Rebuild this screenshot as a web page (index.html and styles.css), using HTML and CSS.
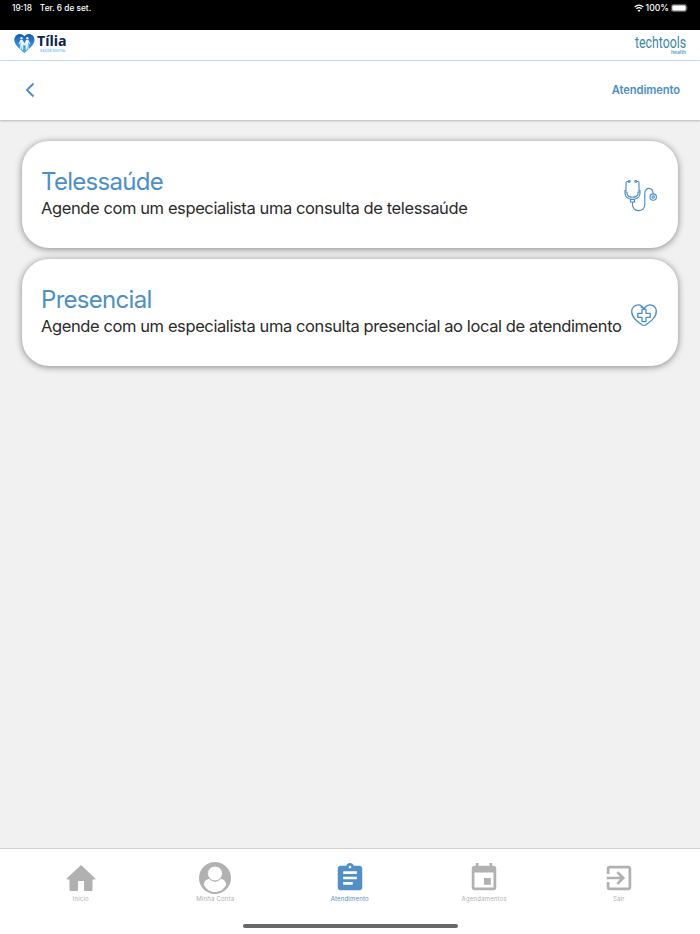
FILE: index.html
```html
<!DOCTYPE html>
<html lang="pt">
<head>
    <meta charset="UTF-8">
    <meta name="viewport" content="width=device-width, initial-scale=1.0">
    <title>Atendimento</title>
    <link rel="stylesheet" href="styles.css">
</head>
<body>
    <div class="status">
        <div class="status-left"><span class="time">19:18</span><span class="date">Ter. 6 de set.</span></div>
        <div class="status-right">
            <svg class="wifi" viewBox="0 0 10 8">
                <path d="M.7 3Q5-.8 9.3 3M2.4 4.8Q5 2.5 7.6 4.8" fill="none" stroke="#fff" stroke-width="1.3"/>
                <path d="M5 8L3.5 6.3Q5 5 6.5 6.3z" fill="#fff"/>
            </svg>
            <span class="percent">100%</span>
            <svg class="battery" viewBox="0 0 18 8">
                <rect x=".4" y=".4" width="15.2" height="7.2" rx="2" fill="none" stroke="#777" stroke-width=".8"/>
                <rect x="1.2" y="1.2" width="13.6" height="5.6" rx="1.2" fill="#fff"/>
                <path d="M16.4 2.8q1.2 1.2 0 2.4z" fill="#777"/>
            </svg>
        </div>
    </div>
    <div class="brand">
        <svg class="logo-tilia" viewBox="0 0 54 22">
            <defs>
                <linearGradient id="heart" x1="0" y1="0" x2="0" y2="1">
                    <stop offset="0" stop-color="#1559b0"/>
                    <stop offset="1" stop-color="#4ab4ff"/>
                </linearGradient>
            </defs>
            <path d="M10.4 20.2C6 16.2.3 12 .3 6.8.3 1 7-1.2 10.4 3.3 13.8-1.2 20.5 1 20.5 6.8 20.5 12 14.8 16.2 10.4 20.2z" fill="url(#heart)"/>
            <g fill="#eaf5ff">
                <circle cx="7.5" cy="5.3" r="1.2"/>
                <circle cx="13.3" cy="5.3" r="1.2"/>
                <path d="M6.3 7h2.4l1.7 3.5L12.1 7h2.4l1.8 4-.7.5-1.3-2.3.4 7h-1.2l-.3-3.6-.5 4.5h-1l-.3-5.3-1 .8-1-.8-.3 5.3h-1l-.5-4.5-.3 3.6H6l.5-7-1.3 2.3-.7-.5z"/>
            </g>
            <text class="tilia-name" x="23" y="13.4" textLength="29.5" lengthAdjust="spacingAndGlyphs">Tília</text>
            <text class="tilia-sub" x="26" y="18.600" textLength="26" lengthAdjust="spacingAndGlyphs">SAÚDE DIGITAL</text>
        </svg>
        <svg class="logo-tech" viewBox="0 0 52 22">
            <text class="tech-name" x="0" y="15" textLength="51" lengthAdjust="spacingAndGlyphs">techtools</text>
            <text class="tech-sub" x="36" y="21" textLength="15" lengthAdjust="spacingAndGlyphs">health</text>
        </svg>
    </div>
    <div class="header">
        <svg class="back" viewBox="0 0 10 16"><path d="M8.5 1.5L2 8l6.500 6.500" fill="none" stroke="currentColor" stroke-width="1.900"/></svg>
        <div class="title">Atendimento</div>
    </div>
    <div class="content">
        <div class="card">
            <div class="card-text">
                <div class="card-title">Telessaúde</div>
                <div class="card-desc">Agende com um especialista uma consulta de telessaúde</div>
            </div>
            <svg class="stethoscope" viewBox="0 0 34 34">
                <g fill="none" stroke="currentColor" stroke-width="1.150">
                    <path d="M4.500 2.500H3.200Q2 2.500 2 3.700V11.500H1V14.500Q1.500 19.500 7 20.200H10Q15.500 19.500 16 14.500V11.500H15V3.700Q15 2.500 13.800 2.500H12.500"/>
                    <path d="M1 13h2V15Q4 18.200 8.500 18.200T14 15V13h2"/>
                    <circle cx="5.300" cy="2.500" r=".9"/>
                    <circle cx="11.700" cy="2.500" r=".9"/>
                    <path d="M6.500 20.500h4v2.500h-4zM8.500 23V25.500C8.500 34 20.800 33.500 20.800 25.500V14.500C20.800 7.500 29 8 29 14.500V15"/>
                    <circle cx="29.200" cy="18" r="3.200"/>
                    <circle cx="29.200" cy="18" r="1.200"/>
                </g>
            </svg>
        </div>
        <div class="card">
            <div class="card-text">
                <div class="card-title">Presencial</div>
                <div class="card-desc">Agende com um especialista uma consulta presencial ao local de atendimento</div>
            </div>
            <svg class="heart" viewBox="0 0 26 22">
                <g fill="none" stroke="currentColor" stroke-width="1.300" stroke-linejoin="round">
                    <path d="M9.500 3.200Q11 3.200 12.900 4.800 15 1.200 18.600.8C23.500.7 25.300 4.500 25.300 7.500 25.300 13.500 19.500 17.500 14.500 21Q12.900 21.800 11.300 21C6.300 17.500.7 13.500.7 7.500.7 3.500 3.800.7 7.400.8Q11 1 12.900 4.800"/>
                    <path d="M11 5.300h4V9.400h4.200v4H15v4.200h-4v-4.200H6.800v-4H11z"/>
                </g>
            </svg>
        </div>
    </div>
    <div class="nav">
        <div class="nav-item">
            <svg class="nav-icon" viewBox="0 0 34 34">
                <path d="M17 4L31.500 17.700q.3.700-.5.700h-2.500V29q0 1-1 1H21q-1 0-1-1v-9h-6v9q0 1-1 1H6.500q-1 0-1-1V18.400H3q-.8 0-.5-.7z" fill="currentColor"/>
            </svg>
            <div class="nav-label">Início</div>
        </div>
        <div class="nav-item">
            <svg class="nav-icon" viewBox="0 0 34 34">
                <circle cx="17" cy="17" r="16" fill="currentColor"/>
                <path d="M5.800 24C6 20 8.500 18 11.500 18Q17 23.500 22.500 18C25.500 18 28 20 28.200 24 25 29 21.500 31 17 31S9 29 5.800 24z" fill="#fff"/>
                <circle cx="17" cy="12.500" r="7.500" fill="#fff" stroke="currentColor"/>
            </svg>
            <div class="nav-label">Minha Conta</div>
        </div>
        <div class="nav-item active">
            <svg class="nav-icon" viewBox="-.5 -.5 25 25">
                <path d="M19 3h-4.180C14.400 1.840 13.300 1 12 1s-2.400.84-2.820 2H5c-1.100 0-2 .9-2 2v14c0 1.100.9 2 2 2h14c1.100 0 2-.9 2-2V5c0-1.100-.9-2-2-2zm-7 0c.55 0 1 .45 1 1s-.45 1-1 1-1-.45-1-1 .45-1 1-1zm2 14H7v-2h7v2zm3-4H7v-2h10v2zm0-4H7V7h10v2z" fill="currentColor"/>
            </svg>
            <div class="nav-label">Atendimento</div>
        </div>
        <div class="nav-item">
            <svg class="nav-icon" viewBox="-.5 -.5 25 25">
                <path d="M17 12h-5v5h5v-5zM16 1v2H8V1H6v2H5c-1.110 0-1.990.9-1.990 2L3 19c0 1.100.89 2 2 2h14c1.100 0 2-.9 2-2V5c0-1.100-.9-2-2-2h-1V1h-2zm3 18H5V8h14v11z" fill="currentColor"/>
            </svg>
            <div class="nav-label">Agendamentos</div>
        </div>
        <div class="nav-item">
            <svg class="nav-icon" viewBox="-.5 -.5 25 25">
                <path d="M10.090 15.590L11.500 17l5-5-5-5-1.410 1.410L12.670 11H3v2h9.670l-2.580 2.590zM19 3H5c-1.110 0-2 .9-2 2v4h2V5h14v14H5v-4H3v4c0 1.100.89 2 2 2h14c1.100 0 2-.9 2-2V5c0-1.100-.9-2-2-2z" fill="currentColor"/>
            </svg>
            <div class="nav-label">Sair</div>
        </div>
    </div>
    <div class="home-bar"><div class="home-line"></div></div>
</body>
</html>
```

FILE: styles.css
```css
* {
    box-sizing: border-box;
}
body {
    display: flex;
    flex-direction: column;
    height: 934px;
    margin: 0;
    background-color: #f1f1f1;
    font-family: Inter, "Liberation Sans", sans-serif;
    overflow: hidden;
}
svg {
    display: block;
    flex-shrink: 0;
    overflow: visible;
}
.status {
    display: flex;
    justify-content: space-between;
    height: 30px;
    padding: 3px 11px 0 12px;
    background-color: #000;
    color: #fff;
    font-size: 8.3px;
    font-weight: 500;
    line-height: 11px;
}
.status-left {
    display: flex;
    gap: 8px;
}
.status-right {
    display: flex;
    gap: 2px;
}
.percent {
    font-size: 8.7px;
}
.wifi {
    width: 10px;
    height: 8px;
    margin-top: 1px;
}
.battery {
    width: 18px;
    height: 8px;
    margin-top: 1px;
}
.brand {
    display: flex;
    justify-content: space-between;
    height: 31px;
    padding: 3px 13px 0 14px;
    background-color: #fff;
    border-bottom: 1px solid #c5dff0;
}
.logo-tilia {
    width: 54px;
    height: 22px;
}
.tilia-name {
    font-family: "Noto Sans", sans-serif;
    font-size: 14.5px;
    font-weight: bold;
    fill: #0c2352;
}
.tilia-sub {
    font-size: 4px;
    font-weight: 600;
    fill: #79c5f5;
}
.logo-tech {
    width: 52px;
    height: 22px;
}
.tech-name {
    font-family: Roboto, sans-serif;
    font-size: 16px;
    fill: #3b86a8;
}
.tech-sub {
    font-size: 5px;
    font-weight: 600;
    fill: #4aa3d0;
}
.header {
    display: flex;
    justify-content: space-between;
    align-items: center;
    height: 59px;
    padding: 0 20px 2px 25px;
    background-color: #fff;
    color: #4b8fc8;
    box-shadow: 0 1px 2px rgba(0, 0, 0, 0.25);
}
.back {
    width: 10px;
    height: 16px;
}
.title {
    font-size: 11.2px;
    font-weight: 600;
    letter-spacing: -0.1px;
}
.content {
    display: flex;
    flex-direction: column;
    flex: 1;
    gap: 11px;
    padding: 21px 22px 0;
}
.card {
    display: flex;
    justify-content: space-between;
    height: 107px;
    padding: 27px 21px 0 19px;
    background-color: #fff;
    border-radius: 27px;
    box-shadow: 0 1px 7px rgba(0, 0, 0, 0.45);
    color: #4b8fc8;
}
.card-text {
    width: 0;
    white-space: nowrap;
}
.card-title {
    font-size: 24px;
    line-height: 28px;
    letter-spacing: -0.7px;
}
.card-desc {
    color: #2b2b2b;
    font-size: 16.5px;
    line-height: 24px;
    letter-spacing: -0.4px;
}
.stethoscope {
    width: 34px;
    height: 34px;
    margin: 11px -1px 0 0;
}
.heart {
    width: 26px;
    height: 22px;
    margin-top: 18px;
}
.nav {
    display: flex;
    height: 70px;
    padding: 12px 14px 0 13.5px;
    background-color: #fff;
    border-top: 1px solid #cfcfcf;
}
.nav-item {
    display: flex;
    flex: 1;
    flex-direction: column;
    align-items: center;
    color: #b1b1b1;
}
.nav-item.active {
    color: #5090c6;
}
.nav-icon {
    width: 34px;
    height: 34px;
}
.nav-label {
    font-size: 6px;
    line-height: 8px;
    letter-spacing: 0.2px;
}
.home-bar {
    display: flex;
    justify-content: center;
    height: 16px;
    padding-top: 6px;
    background-color: #fff;
}
.home-line {
    width: 215px;
    height: 4px;
    border-radius: 2px;
    background-color: #686a69;
}
```
